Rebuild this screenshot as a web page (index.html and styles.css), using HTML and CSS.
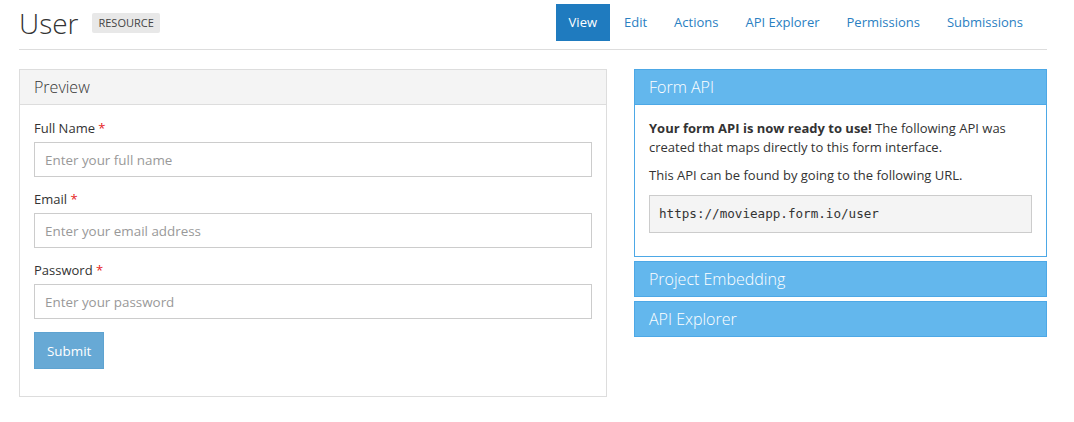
FILE: index.html
```html
<!DOCTYPE html>
<html lang="en">
<head>
<meta charset="utf-8">
<title>User</title>
<link rel="stylesheet" href="styles.css">
</head>
<body>
<div class="page">
  <header class="topbar">
    <h1 class="title">User</h1>
    <span class="badge">RESOURCE</span>
    <nav class="tabs">
      <a class="tab active" href="#">View</a>
      <a class="tab" href="#">Edit</a>
      <a class="tab" href="#">Actions</a>
      <a class="tab" href="#">API Explorer</a>
      <a class="tab" href="#">Permissions</a>
      <a class="tab" href="#">Submissions</a>
    </nav>
  </header>

  <main class="content">
    <section class="col-left">
      <div class="panel">
        <div class="panel-heading">Preview</div>
        <div class="panel-body">
          <div class="form-group">
            <label class="label">Full Name <span class="req">*</span></label>
            <input class="input" type="text" placeholder="Enter your full name">
          </div>
          <div class="form-group">
            <label class="label">Email <span class="req">*</span></label>
            <input class="input" type="text" placeholder="Enter your email address">
          </div>
          <div class="form-group">
            <label class="label">Password <span class="req">*</span></label>
            <input class="input" type="password" placeholder="Enter your password">
          </div>
          <div class="form-group">
            <button class="btn-submit" type="button">Submit</button>
          </div>
        </div>
      </div>
    </section>

    <section class="col-right">
      <div class="panel panel-info">
        <div class="panel-heading">Form API</div>
        <div class="panel-body">
          <p class="para"><strong>Your form API is now ready to use!</strong> The following API was created that maps directly to this form interface.</p>
          <p class="para">This API can be found by going to the following URL.</p>
          <pre class="code">https://movieapp.form.io/user</pre>
        </div>
      </div>
      <div class="panel panel-info collapsed">
        <div class="panel-heading">Project Embedding</div>
      </div>
      <div class="panel panel-info collapsed">
        <div class="panel-heading">API Explorer</div>
      </div>
    </section>
  </main>
</div>
</body>
</html>
```

FILE: styles.css
```css
* { box-sizing: border-box; }

html, body {
  margin: 0;
  padding: 0;
  background: #fff;
}

body {
  font-family: "Open Sans", "Liberation Sans", sans-serif;
  font-size: 13px;
  line-height: 18px;
  color: #333;
}

.page {
  width: 1074px;
  padding: 0 27px 0 19px;
}

.topbar {
  display: flex;
  align-items: flex-start;
  height: 50px;
  border-bottom: 1px solid #dddddd;
}

.title {
  margin: 0;
  font-size: 28px;
  font-weight: 300;
  line-height: 28px;
  margin-top: 9px;
  color: #333;
}

.badge {
  margin-left: 14px;
  margin-top: 13px;
  height: 20px;
  line-height: 20px;
  padding: 0 6px;
  font-size: 11px;
  background: #e8e8e8;
  color: #444;
  border-radius: 2px;
}

.tabs {
  display: flex;
  margin-left: auto;
  margin-right: 11px;
  margin-top: 4px;
  gap: 1px;
}

.tab {
  display: block;
  height: 37px;
  line-height: 37px;
  padding: 0 13px;
  font-size: 13px;
  color: #2a80c2;
  text-decoration: none;
}

.tab.active {
  background: #1f7bbf;
  color: #fff;
}

.content {
  display: flex;
  gap: 27px;
  margin-top: 19px;
  align-items: flex-start;
}

.col-left { width: 588px; }
.col-right { width: 413px; }

.panel {
  border: 1px solid #dddddd;
  background: #fff;
}

.panel-heading {
  height: 35px;
  line-height: 35px;
  padding: 0 14px;
  font-size: 16px;
  font-weight: 300;
  background: #f4f4f4;
  border-bottom: 1px solid #dddddd;
  color: #333;
}

.panel-body {
  padding: 14px 14px 14px;
}

.form-group { margin-bottom: 13px; }
.form-group:last-child { margin-bottom: 13px; }

.label {
  display: block;
  margin-bottom: 5px;
  line-height: 18px;
  color: #333;
}

.req { color: #e52222; }

.input {
  display: block;
  width: 100%;
  height: 35px;
  padding: 0 10px;
  border: 1px solid #cccccc;
  border-radius: 0;
  font-family: "Open Sans", "Liberation Sans", sans-serif;
  font-size: 13.4px;
  color: #333;
  background: #fff;
}

.input::placeholder { color: #999; }

.btn-submit {
  display: block;
  height: 37px;
  padding: 0 12px;
  border: 1px solid #5ea3d1;
  background: #67a9d5;
  color: #fff;
  font-family: "Open Sans", "Liberation Sans", sans-serif;
  font-size: 13.4px;
  border-radius: 0;
}

.panel-info {
  border-color: #4da8e6;
  margin-bottom: 4px;
}

.panel-info .panel-heading {
  background: #63b7ed;
  border-bottom-color: #4da8e6;
  color: #fff;
}

.panel-info.collapsed .panel-heading {
  border-bottom: 0;
  height: 34px;
  line-height: 34px;
}

.para {
  margin: 0 0 10px;
  line-height: 18.5px;
}

.para strong { font-weight: 700; }

.code {
  margin: 0 0 9px;
  padding: 9px 9px;
  height: 38px;
  line-height: 18px;
  font-family: "DejaVu Sans Mono", "Liberation Mono", monospace;
  font-size: 12.6px;
  background: #f4f4f4;
  border: 1px solid #cccccc;
  color: #333;
}
```
